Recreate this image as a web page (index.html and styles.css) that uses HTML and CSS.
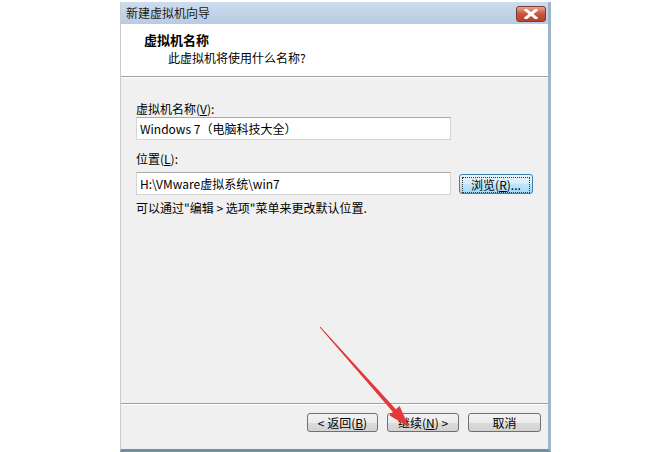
FILE: index.html
```html
<!DOCTYPE html>
<html>
<head>
<meta charset="utf-8">
<link rel="stylesheet" href="styles.css">
</head>
<body>
<div class="page">
  <div class="dialog">
    <div class="titlebar">
      <span class="title">新建虚拟机向导</span>
      <button class="close" aria-label="close">
        <svg width="14" height="10" viewBox="0 0 14 10"><path d="M2 1 L12 9 M12 1 L2 9" stroke="#fff" stroke-width="3" stroke-linecap="square"/></svg>
      </button>
    </div>
    <div class="header">
      <div class="h-title">虚拟机名称</div>
      <div class="h-sub">此虚拟机将使用什么名称?</div>
    </div>
    <div class="body">
      <div class="label">虚拟机名称(<u>V</u>):</div>
      <div class="input wide">Windows 7（电脑科技大全）</div>
      <div class="label second">位置(<u>L</u>):</div>
      <div class="row">
        <div class="input">H:\VMware虚拟系统\win7</div>
        <button class="btn browse"><span class="focus">浏览(<u>R</u>)...</span></button>
      </div>
      <div class="hint">可以通过"编辑 &gt; 选项"菜单来更改默认位置.</div>
    </div>
    <div class="footer">
      <button class="btn back">&lt; 返回(<u>B</u>)</button>
      <button class="btn next">继续(<u>N</u>) &gt;</button>
      <button class="btn cancel">取消</button>
    </div>
  </div>
  <svg class="arrow" width="670" height="452" viewBox="0 0 670 452">
    <polygon points="320.4,326.7 395.9,409.3 399.6,406 409,427 389.2,415.2 392.9,411.9 319.6,327.3" fill="#e4393a"/>
  </svg>
</div>
</body>
</html>
```
FILE: styles.css
```css
html, body { margin: 0; padding: 0; background: #fff; }
body { font-family: "Noto Sans CJK SC", "Liberation Sans", sans-serif; font-size: 12px; color: #000; }
.page { position: relative; width: 670px; height: 452px; padding-left: 120px; box-sizing: border-box; overflow: hidden; }
.dialog { width: 431px; height: 450px; margin-top: 2px; box-sizing: border-box; border-left: 1px solid #c6ccd4; border-right: 3px solid #9eb6c6; border-bottom: 3px solid #6f929f; display: flex; flex-direction: column; background: #f0f0f0; }
.titlebar { height: 22px; flex: none; background: linear-gradient(#cddcee, #b7cbe3); display: flex; align-items: center; justify-content: space-between; padding: 0 2px 0 5px; }
.title { font-size: 12px; line-height: 22px; color: #1a1a1a; }
.close { width: 30px; height: 16px; margin-top: 2px; border: 1px solid #7a3b30; border-radius: 3px; background: linear-gradient(#e8a493, #c8553e 50%, #b8432c); padding: 0; display: flex; align-items: center; justify-content: center; }
.header { height: 53px; flex: none; background: #fff; border-bottom: 1px solid #a0a0a0; box-shadow: 0 1px 0 #fff; padding: 7px 0 0 23px; box-sizing: border-box; }
.h-title { font-weight: bold; font-size: 13px; line-height: 18px; }
.h-sub { padding-left: 24px; line-height: 17px; }
.body { flex: 1; padding: 24px 0 0 15px; border-bottom: 1px solid #a0a0a0; box-shadow: 0 1px 0 #fff; }
.label { line-height: 16px; }
.label.second { margin-top: 11px; }
.input { width: 315px; height: 23px; box-sizing: border-box; border: 1px solid #d5d5d5; border-top-color: #ababab; background: #fff; padding-left: 3px; line-height: 21px; }
.row { display: flex; align-items: center; gap: 8px; margin-top: 5px; }
.hint { margin-top: 4px; line-height: 18px; }
.btn { font-family: inherit; font-size: 12px; height: 20px; width: 72px; border: 1px solid #707070; border-radius: 3px; background: linear-gradient(#f3f3f3, #ebebeb 50%, #dcdcdc 51%, #d2d2d2); padding: 0; color: #000; line-height: 16px; }
.browse { width: 74px; border-color: #3c7fb1; background: linear-gradient(#e8f4fb, #d8ecf8 50%, #bee6fd 51%, #a7d9f5); padding: 2px; }
.browse .focus { display: block; border: 1px dotted #333; height: 14px; line-height: 14px; }
.footer { height: 36px; flex: none; display: flex; align-items: flex-start; padding: 9px 0 0 186px; gap: 9px; }
.footer .btn { height: 19px; }
.back { width: 71px; }
.next { width: 72px; }
.cancel { width: 73px; }
.arrow { position: absolute; left: 0; top: 0; pointer-events: none; }
```
